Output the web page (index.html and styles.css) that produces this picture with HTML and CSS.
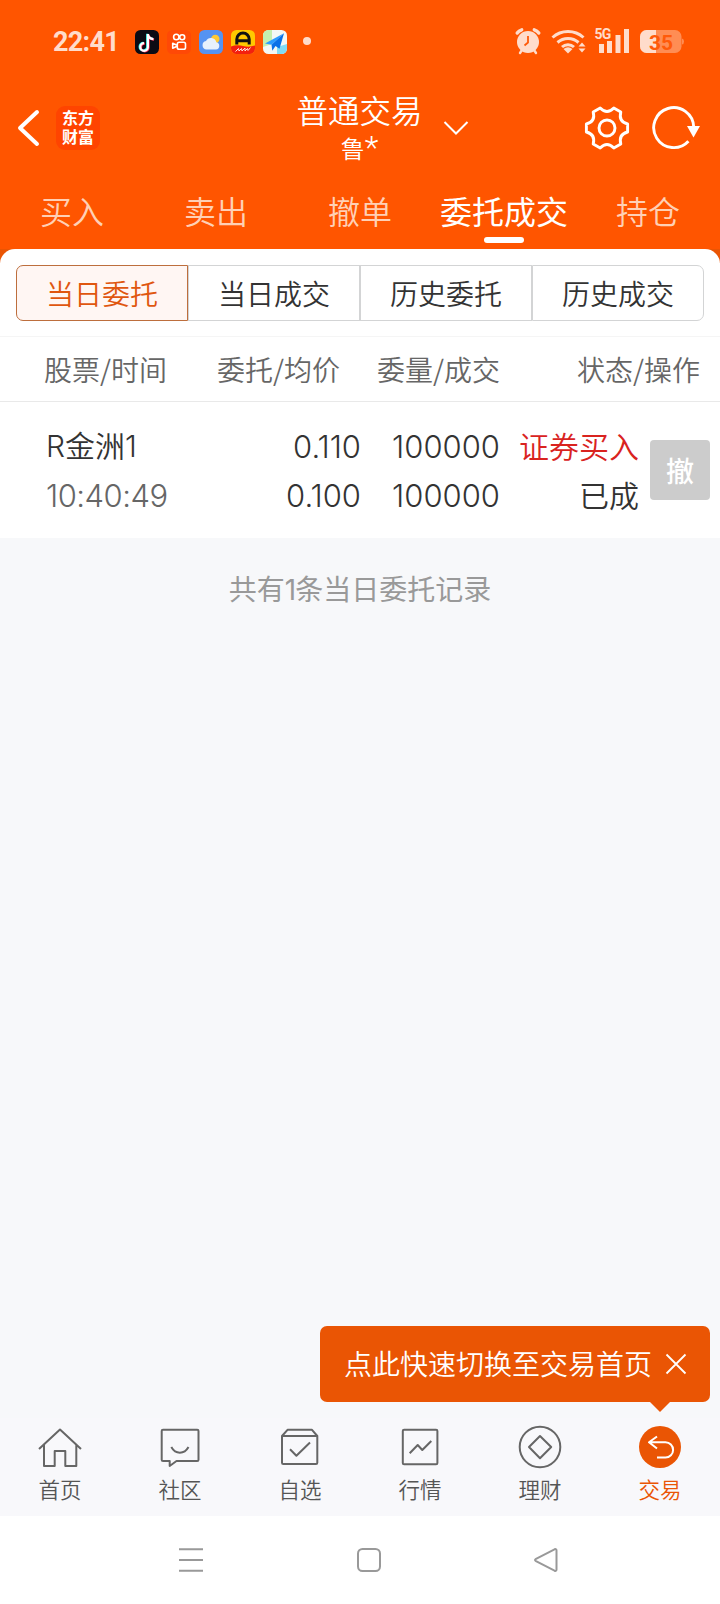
FILE: index.html
```html
<!DOCTYPE html>
<html lang="zh-CN">
<head>
<meta charset="utf-8">
<title>普通交易</title>
<link rel="stylesheet" href="styles.css">
</head>
<body>
<div class="screen">
  <header class="top">
    <div class="status">
      <div class="status-left">
        <span class="clock">22:41</span>
        <svg class="app" viewBox="0 0 24 24"><rect width="24" height="24" rx="5.5" fill="#0b0b14"/><g fill="none" stroke-width="2.2"><path d="M12.2 3.700v13a3.800 3.800 0 1 1-3.800-3.800M12.200 4.200c.4 2.800 2.400 4.300 5.500 4.700" stroke="#25f4ee"/><path d="M13.600 4.500v13a3.800 3.800 0 1 1-3.800-3.800M13.600 5c.4 2.800 2.400 4.300 5.500 4.700" stroke="#fe2c55"/><path d="M12.900 4v13a3.800 3.800 0 1 1-3.800-3.800M12.900 4.500c.4 2.800 2.400 4.300 5.500 4.700" stroke="#fff"/></g></svg>
        <svg class="app" viewBox="0 0 24 24"><rect width="24" height="24" rx="5.500" fill="#ff4906"/><g fill="none" stroke="#fff" stroke-width="1.600"><circle cx="9.300" cy="7" r="2.700"/><circle cx="15.200" cy="7.300" r="2.500"/><rect x="10.300" y="12.200" width="8.200" height="7" rx="1.800"/><path d="M10 15.300l-4.300-2v5l4.300-2" stroke-linejoin="round"/></g></svg>
        <svg class="app" viewBox="0 0 24 24"><rect width="24" height="24" rx="5.500" fill="#5593f2"/><circle cx="16.300" cy="9" r="4.200" fill="#ffc934"/><path d="M7.500 19.500a4.300 4.300 0 0 1-.5-8.500 5.500 5.500 0 0 1 10.300 1.200 3.700 3.700 0 0 1-.3 7.300z" fill="#e8f1fc"/></svg>
        <svg class="app" viewBox="0 0 24 24"><rect width="24" height="24" rx="5.500" fill="#ffc900"/><path d="M0 16.500q6-2 12-.5t12-.5v3a5.500 5.500 0 0 1-5.500 5.500h-13a5.500 5.500 0 0 1-5.500-5.500z" fill="#f3200f"/><path d="M5.800 14.500V9.200a6.200 6.200 0 0 1 12.400 0v5.300M6 10.800h12" fill="none" stroke="#111" stroke-width="3"/><path d="M4.500 21.500l3-3 .5 2.500 2.500-2.500.5 2.500 3-3v3l2.500-2.500.5 2 2.500-3" fill="none" stroke="#ffe6df" stroke-width="1"/></svg>
        <svg class="app" viewBox="0 0 24 24"><rect width="24" height="24" rx="5.500" fill="#f4f8f5"/><path d="M5.500 0H9v14l-9 3V5.500A5.500 5.500 0 0 1 5.500 0z" fill="#c5efae"/><path d="M14 17l10-3v4.500a5.500 5.500 0 0 1-5.500 5.500H14z" fill="#82dcf5"/><path d="M21 3.200L2 13.500l6.500 1.200z" fill="#2a9bff"/><path d="M21 3.200L8.500 14.700l.8 6 3.200-4.700 4 2.800z" fill="#0870e8"/></svg>
        <span class="dot"></span>
      </div>
      <svg class="status-right" viewBox="510 24 180 34">
        <g fill="#ffdccb" stroke="#ffdccb">
          <circle cx="528" cy="42" r="11" stroke="none"/>
          <path d="M522 50l-2 3M534 50l2 3" stroke-width="2.400" stroke-linecap="round"/>
          <path d="M517.200 33a8 8 0 0 1 4.500-3.200M534.300 29.800a8 8 0 0 1 4.500 3.200" fill="none" stroke-width="3.400" stroke-linecap="round"/>
          <path d="M528 36v6.500l-3.500 3" fill="none" stroke="#ff5a0a" stroke-width="1.800"/>
          <path d="M552.500 37.500a23 23 0 0 1 31 0M557.500 42.500a16 16 0 0 1 21 0M562 47a9 9 0 0 1 12 0" fill="none" stroke-width="3"/>
          <path d="M563.500 49q4.500-3.500 9 0l-4.500 4.500z" stroke="none"/>
          <path d="M578.500 46.500l3.500-4 3.500 4zM578.500 48.500l3.500 4 3.500-4z" stroke="none"/>
          <path d="M599 44h5v9h-5zM607 41h5v12h-5zM615.500 35h5v18h-5zM624 29h5v24h-5z" stroke="none"/>
        </g>
        <text class="net" x="594.500" y="39">5G</text>
        <rect x="640" y="30" width="41.500" height="23" rx="6.500" fill="#ff8d54"/>
        <path d="M682 38.500q2 .5 2 3t-2 3z" fill="#ff8d54"/>
        <path d="M656 30h-9.500a6.500 6.500 0 0 0-6.500 6.500v10a6.500 6.500 0 0 0 6.500 6.500h9.500z" fill="#ffdccb"/>
        <text class="battery" x="649" y="49.500">35</text>
      </svg>
    </div>
    <div class="titlebar">
      <div class="title-left">
        <svg class="back" viewBox="16 106 26 44"><path d="M37 112L20 128l17 16" fill="none" stroke="#fff" stroke-width="4" stroke-linecap="round" stroke-linejoin="round"/></svg>
        <div class="logo">东方财富</div>
      </div>
      <div class="title"><span class="title-main">普通交易</span><span class="title-sub">鲁<span class="star">*</span></span></div>
      <div class="title-right">
        <svg class="caret" viewBox="0 0 26 16"><path d="M1.500 2L13 13.500 24.500 2" fill="none" stroke="#fff" stroke-width="2"/></svg>
        <svg class="gear" viewBox="-23 -23 46 46"><path d="M20.600-4L20.600 4Q11.300 6.500 13.800 15.900L6.800 19.900Q0 13-6.800 19.900L-13.800 15.900Q-11.300 6.500-20.600 4V-4Q-11.300-6.500-13.800-15.900L-6.800-19.900Q0-13 6.800-19.900L13.800-15.900Q11.300-6.500 20.600-4Z" fill="none" stroke="#fff" stroke-width="2.900" stroke-linejoin="round"/><circle r="8" fill="none" stroke="#fff" stroke-width="2.900"/></svg>
        <svg class="refresh" viewBox="651 105 50 46"><path d="M688.400 141.200A20 20 0 1 1 693.700 127" fill="none" stroke="#fff" stroke-width="2.900"/><path d="M687 126h13l-6.500 11.500z" fill="#fff"/></svg>
      </div>
    </div>
    <nav class="tabs">
      <span>买入</span><span>卖出</span><span>撤单</span><span class="on">委托成交</span><span>持仓</span>
    </nav>
  </header>

  <main class="body">
    <section class="card">
      <div class="segments">
        <span class="seg on">当日委托</span><span class="seg">当日成交</span><span class="seg">历史委托</span><span class="seg">历史成交</span>
      </div>
      <div class="cols head">
        <span>股票/时间</span><span>委托/均价</span><span>委量/成交</span><span>状态/操作</span>
      </div>
      <div class="cols order">
        <div class="cell name"><span>R金洲1</span><span class="time">10:40:49</span></div>
        <div class="cell num"><span>0.110</span><span>0.100</span></div>
        <div class="cell num"><span>100000</span><span>100000</span></div>
        <div class="cell state"><span class="buy">证券买入</span><span>已成</span></div>
        <span class="cancel">撤</span>
      </div>
    </section>
    <p class="summary">共有<span class="one">1</span>条当日委托记录</p>
  </main>

  <footer class="bottom">
    <div class="tip">
      <span>点此快速切换至交易首页</span>
      <svg class="close" viewBox="0 0 22 22"><path d="M1.500 1.500l19 19M20.500 1.500l-19 19" fill="none" stroke="#fff" stroke-width="1.800"/></svg>
    </div>
    <div class="item"><svg class="icon" viewBox="0 0 44 44"><path d="M1 24L22 4.500 43 24M6 19.500V41H16.700V26H27.300V41H38.300V19.500"/></svg><span>首页</span></div>
    <div class="item"><svg class="icon" viewBox="0 0 44 44"><path d="M5 4.700H39.200q1.300 0 1.300 1.300V34.700q0 1.300-1.300 1.300H18.500L11.700 41V36H5q-1.300 0-1.300-1.300V6q0-1.300 1.300-1.300zM13.300 22q3.200 5.700 8.600 5.700t8.600-5.700"/></svg><span>社区</span></div>
    <div class="item"><svg class="icon" viewBox="0 0 44 44"><path d="M4 11L9.500 4.800H34L39.300 11V37.700q0 1.300-1.300 1.300H5.300Q4 39 4 37.700zH39.300M12 24.300l6.400 6.400L32 17.500"/></svg><span>自选</span></div>
    <div class="item"><svg class="icon" viewBox="0 0 44 44"><rect x="4.800" y="4.700" width="34.600" height="34.600" rx="1.300"/><path d="M11.700 28.300l8-8.300 4.600 5 9-9"/></svg><span>行情</span></div>
    <div class="item"><svg class="icon" viewBox="0 0 44 44"><circle cx="22" cy="22" r="20.300"/><path d="M22 11L33.200 22 22 33.200 11 22z"/></svg><span>理财</span></div>
    <div class="item on"><svg class="icon" viewBox="0 0 44 44"><circle class="disc" cx="22" cy="22" r="21"/><path class="arrow" d="M19 11.500L11 17.300 19 23.500M11 17.300H27.500a7.600 7.600 0 0 1 0 15.200H19"/></svg><span>交易</span></div>
  </footer>

  <div class="sysnav">
    <svg viewBox="0 0 26 26"><path d="M1 2.200h24M1 13h24M1 23.800h24"/></svg>
    <svg viewBox="0 0 26 26"><rect x="2" y="2" width="22" height="22" rx="4.500"/></svg>
    <svg viewBox="0 0 26 26"><path d="M3 11.800L21.500 2.300q2-.8 2 1.300v18.800q0 2.100-2 1.300L3 14.200q-2-1.200 0-2.400z"/></svg>
  </div>
</div>
</body>
</html>
```
FILE: styles.css
```css
* { box-sizing: border-box; }
body {
  margin: 0;
  font-family: "Noto Sans CJK SC", sans-serif;
  font-weight: 350;
  color: #333;
  background: #fff;
}
svg { display: block; flex: none; }
.screen { width: 720px; height: 1604px; display: flex; flex-direction: column; overflow: hidden; }

.top { height: 249px; background: #ff5500; color: #fff; flex: none; }
.status { height: 84px; padding: 0 30px 0 53px; display: flex; align-items: center; justify-content: space-between; }
.status-left { display: flex; align-items: center; gap: 8px; }
.clock {
  width: 74px;
  font: 700 27px/32px Roboto, sans-serif; letter-spacing: -.7px; color: #ffdccb;
}
.app { width: 24px; height: 24px; }
.dot { width: 8px; height: 8px; margin: -2px 0 0 8px; border-radius: 50%; background: #ffdccb; }
.status-right { width: 180px; height: 34px; margin-top: -2px; }
.net { font: 700 14px Roboto, sans-serif; letter-spacing: -.8px; fill: #ffdccb; }
.battery { font: 700 21px Roboto, sans-serif; fill: #ff5a0a; }

.titlebar { height: 88px; display: grid; grid-template-columns: 1fr 128px 1fr; align-items: center; padding: 0 19px 0 18px; }
.title-left { display: flex; align-items: center; gap: 14px; margin-left: -2px; }
.back { width: 26px; height: 44px; }
.logo {
  width: 44px; height: 44px; padding: 2px 6px 0; border-radius: 9px; background: #ff4400;
  font-size: 16px; line-height: 19px; font-weight: 700;
}
.title { display: flex; flex-direction: column; align-items: center; white-space: nowrap; padding-bottom: 1px; }
.title-main { font-size: 31.500px; line-height: 39px; }
.title-sub { font-size: 24px; line-height: 37px; }
.star { font-family: Roboto, sans-serif; font-size: 32px; line-height: 20px; }
.title-right { display: flex; align-items: center; }
.caret { width: 26px; height: 16px; margin-left: 19px; }
.gear { width: 46px; height: 46px; margin-left: auto; }
.refresh { width: 50px; height: 46px; margin-left: 21px; }

.tabs { height: 77px; display: grid; grid-template-columns: repeat(5, 1fr); font-size: 32px; line-height: 76px; text-align: center; }
.tabs span { color: #ffd0b5; white-space: nowrap; }
.tabs .on { color: #fff; font-weight: 400; display: flex; flex-direction: column; align-items: center; }
.tabs .on::after { content: ""; width: 40px; height: 6px; margin-top: -11px; border-radius: 3px; background: #fff; }

.body { height: 1169px; flex: none; background: linear-gradient(#ea5504 14px, #f7f8fa 14px); }
.card { height: 289px; padding-top: 16px; background: #fff; border-radius: 15px 15px 0 0; }
.segments { display: grid; grid-template-columns: repeat(4, 1fr); margin: 0 16px; height: 56px; }
.seg { height: 56px; border: 1px solid #d3d4d5; font-size: 28px; line-height: 55px; text-align: center; }
.seg:last-child { border-radius: 0 7px 7px 0; }
.seg.on { color: #e0560f; background: #fff6f3; border-color: #bd6e3d; border-radius: 7px 0 0 7px; }

.cols { display: grid; }
.head {
  margin-top: 15px; height: 66px; padding: 0 20px 0 44px; grid-template-columns: 173px 160px 1fr auto;
  border-top: 1px solid #f5f5f5; border-bottom: 1px solid #e9e9e9;
  font-size: 28px; line-height: 65px; color: #666;
}
.order { height: 136px; padding: 20px 10px 0 46px; grid-template-columns: 138px 177px 139px 139px 71px; }
.cell { display: flex; flex-direction: column; font-size: 30px; line-height: 49px; white-space: nowrap; text-align: right; }
.name { text-align: left; font-family: Inter, "Noto Sans CJK SC", sans-serif; }
.time, .num { font-size: 31px; font-family: Inter, sans-serif; }
.time { color: #666; letter-spacing: -.5px; }
.state { margin-top: -1px; }
.buy { color: #d9231f; }
.cancel {
  width: 60px; height: 60px; margin: 18px 0 0 auto; border-radius: 4px; background: #ccc; color: #fff;
  font-size: 28px; line-height: 61px; text-align: center; font-weight: 500;
}
.summary { margin: 29px 0 0; font-size: 28px; line-height: 42px; color: #999; text-align: center; font-weight: 400; }
.one { font-family: Inter, sans-serif; letter-spacing: -1px; }

.bottom { position: relative; height: 98px; flex: none; padding-top: 7px; display: grid; grid-template-columns: repeat(6, 1fr); background: #f8f8fb; }
.item { display: flex; flex-direction: column; align-items: center; font-size: 21.500px; line-height: 40px; color: #555; }
.icon { width: 44px; height: 44px; fill: none; stroke: #666; stroke-width: 2; stroke-linejoin: round; }
.item.on { color: #ea5504; }
.disc { fill: #ea5504; stroke: none; }
.arrow { stroke: #fff; }
.tip {
  position: absolute; right: 10px; bottom: 114px; width: 390px; height: 76px; padding: 0 23px 0 24px;
  display: flex; align-items: center; justify-content: space-between;
  border-radius: 7px; background: #ea5504; color: #fff; font-size: 28px; line-height: 74px; white-space: nowrap;
}
.tip > span { margin-top: -2px; }
.tip::after { content: ""; position: absolute; right: 40px; top: 76px; border: 10px solid transparent; border-top-color: #ea5504; border-bottom: 0; }
.close { width: 22px; height: 22px; }

.sysnav { height: 88px; flex: none; display: flex; justify-content: center; align-items: center; gap: 151.500px; padding-left: 17px; background: #fff; }
.sysnav svg { width: 26px; height: 26px; fill: none; stroke: #999; stroke-width: 2; }
```
